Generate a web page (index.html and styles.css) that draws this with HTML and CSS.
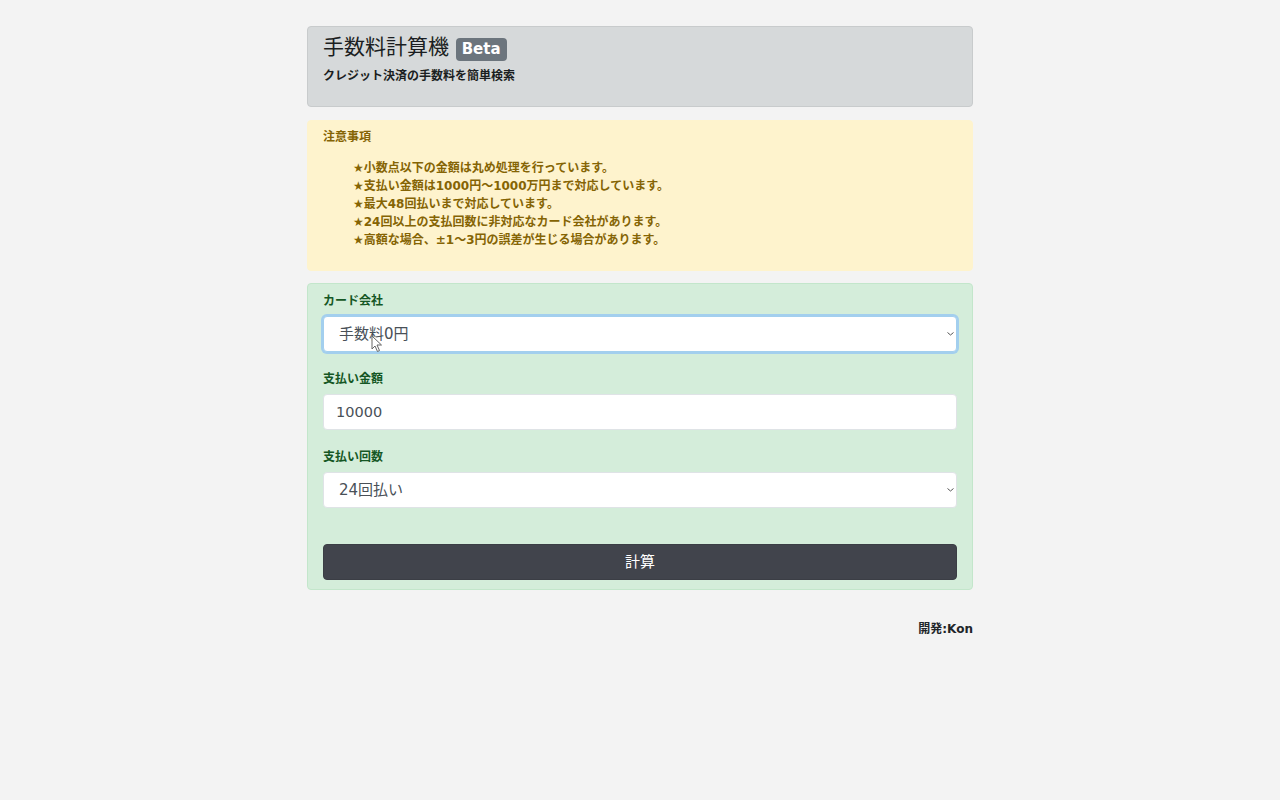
FILE: index.html
```html
<!DOCTYPE html>
<html lang="ja">
<head>
  <meta charset="UTF-8" />
  <meta name="viewport" content="width=device-width, initial-scale=1.0"/>
  <title>手数料計算機</title>
  <link rel="stylesheet" href="styles.css">
</head>
<body>

  <main class="container">

    <!-- Title -->
    <div class="box box-title">
      <h1>手数料計算機 <span class="badge">Beta</span></h1>
      <p class="lead">クレジット決済の手数料を簡単検索</p>
    </div>

    <!-- Notes -->
    <div class="box box-note">
      <h2>注意事項</h2>
      <ul>
        <li>★小数点以下の金額は丸め処理を行っています。</li>
        <li>★支払い金額は1000円～1000万円まで対応しています。</li>
        <li>★最大48回払いまで対応しています。</li>
        <li>★24回以上の支払回数に非対応なカード会社があります。</li>
        <li>★高額な場合、±1～3円の誤差が生じる場合があります。</li>
      </ul>
    </div>

    <!-- Form -->
    <form class="box box-form">
      <div class="field">
        <label for="card">カード会社</label>
        <div class="select-wrap">
          <select id="card" class="control focused">
            <option>手数料0円</option>
          </select>
          <svg class="chevron" width="7" height="4" viewBox="0 0 7 4">
            <path d="M.5.5l3 2.500 3-2.500" fill="none" stroke="#555" stroke-width="1"/>
          </svg>
          <svg class="cursor" width="12" height="18" viewBox="0 0 12 18">
            <path d="M1 1v13l3-3 2.500 5.500 2-1L6 10h4.500z" fill="#fff" stroke="#666" stroke-width="1"/>
          </svg>
        </div>
      </div>
      <div class="field">
        <label for="amount">支払い金額</label>
        <input id="amount" class="control control-input" type="text" value="10000" />
      </div>
      <div class="field">
        <label for="count">支払い回数</label>
        <div class="select-wrap">
          <select id="count" class="control">
            <option>24回払い</option>
          </select>
          <svg class="chevron" width="7" height="4" viewBox="0 0 7 4">
            <path d="M.5.5l3 2.500 3-2.500" fill="none" stroke="#555" stroke-width="1"/>
          </svg>
        </div>
      </div>
      <button type="button" class="submit">計算</button>
    </form>

    <p class="credit">開発:Kon</p>
  </main>

</body>
</html>
```

FILE: styles.css
```css
:root {
  --bg: #f3f3f3;
  --font: 'DejaVu Sans', 'Noto Sans CJK JP', sans-serif;
}

* {
  margin: 0;
  padding: 0;
  box-sizing: border-box;
  font-family: var(--font);
}

body {
  background-color: var(--bg);
  color: #212529;
}

.container {
  width: 666px;
  margin: 0 auto;
  padding-top: 26px;
}

.box {
  border: 1px solid transparent;
  border-radius: 4px;
  padding: 0 15px;
}

.box-title {
  height: 81px;
  margin-bottom: 13px;
  background: #d6d9da;
  border-color: #c8cbcc;
  color: #1b1e21;
}

h1 {
  font-size: 21px;
  font-weight: 400;
  line-height: 24px;
  margin-top: 8px;
}

.badge {
  display: inline-block;
  vertical-align: 0;
  padding: 0 6px;
  height: 23px;
  line-height: 22px;
  font-size: 15px;
  font-weight: 700;
  color: #fff;
  background: #6c757d;
  border-radius: 4px;
}

.lead {
  font-size: 12px;
  font-weight: 700;
  line-height: 18px;
  margin-top: 6px;
}

.box-note {
  height: 151px;
  margin-bottom: 12px;
  background: #fef3cd;
  border-color: #fef3cd;
  color: #856404;
}

h2 {
  font-size: 12px;
  font-weight: 700;
  line-height: 18px;
  margin-top: 7px;
}

ul {
  list-style: none;
  margin-top: 13px;
  padding-left: 30px;
}

li {
  font-size: 12px;
  font-weight: 700;
  line-height: 18px;
}

.box-form {
  height: 307px;
  background: #d4edda;
  border-color: #c3e6cb;
  color: #155724;
}

.field {
  margin-top: 8px;
  margin-bottom: 18px;
}

.field + .field {
  margin-top: 0;
}

label {
  display: block;
  font-size: 12px;
  font-weight: 700;
  line-height: 18px;
  margin-bottom: 6px;
}

.control {
  display: block;
  width: 100%;
  height: 36px;
  padding: 0 15px;
  font-size: 15px;
  color: #495057;
  background: #fff;
  border: 1px solid #dfe3e6;
  border-radius: 4px;
  outline: none;
  appearance: none;
}

.control-input {
  padding: 0 12px;
  font-size: 14.5px;
}

.focused {
  border-color: #a3cfee;
  box-shadow: 0 0 0 2px #a3cfee;
}

.select-wrap {
  position: relative;
}

.chevron {
  position: absolute;
  right: 3px;
  top: 16px;
}

.cursor {
  position: absolute;
  left: 48px;
  top: 19px;
}

.submit {
  display: block;
  width: 100%;
  height: 36px;
  margin-top: 36px;
  padding-bottom: 4px;
  font-size: 15px;
  color: #fff;
  background: #41444c;
  border: 1px solid #3b3e45;
  border-radius: 4px;
  cursor: pointer;
}

.credit {
  text-align: right;
  font-size: 12px;
  font-weight: 700;
  line-height: 18px;
  margin-top: 30px;
}
```
